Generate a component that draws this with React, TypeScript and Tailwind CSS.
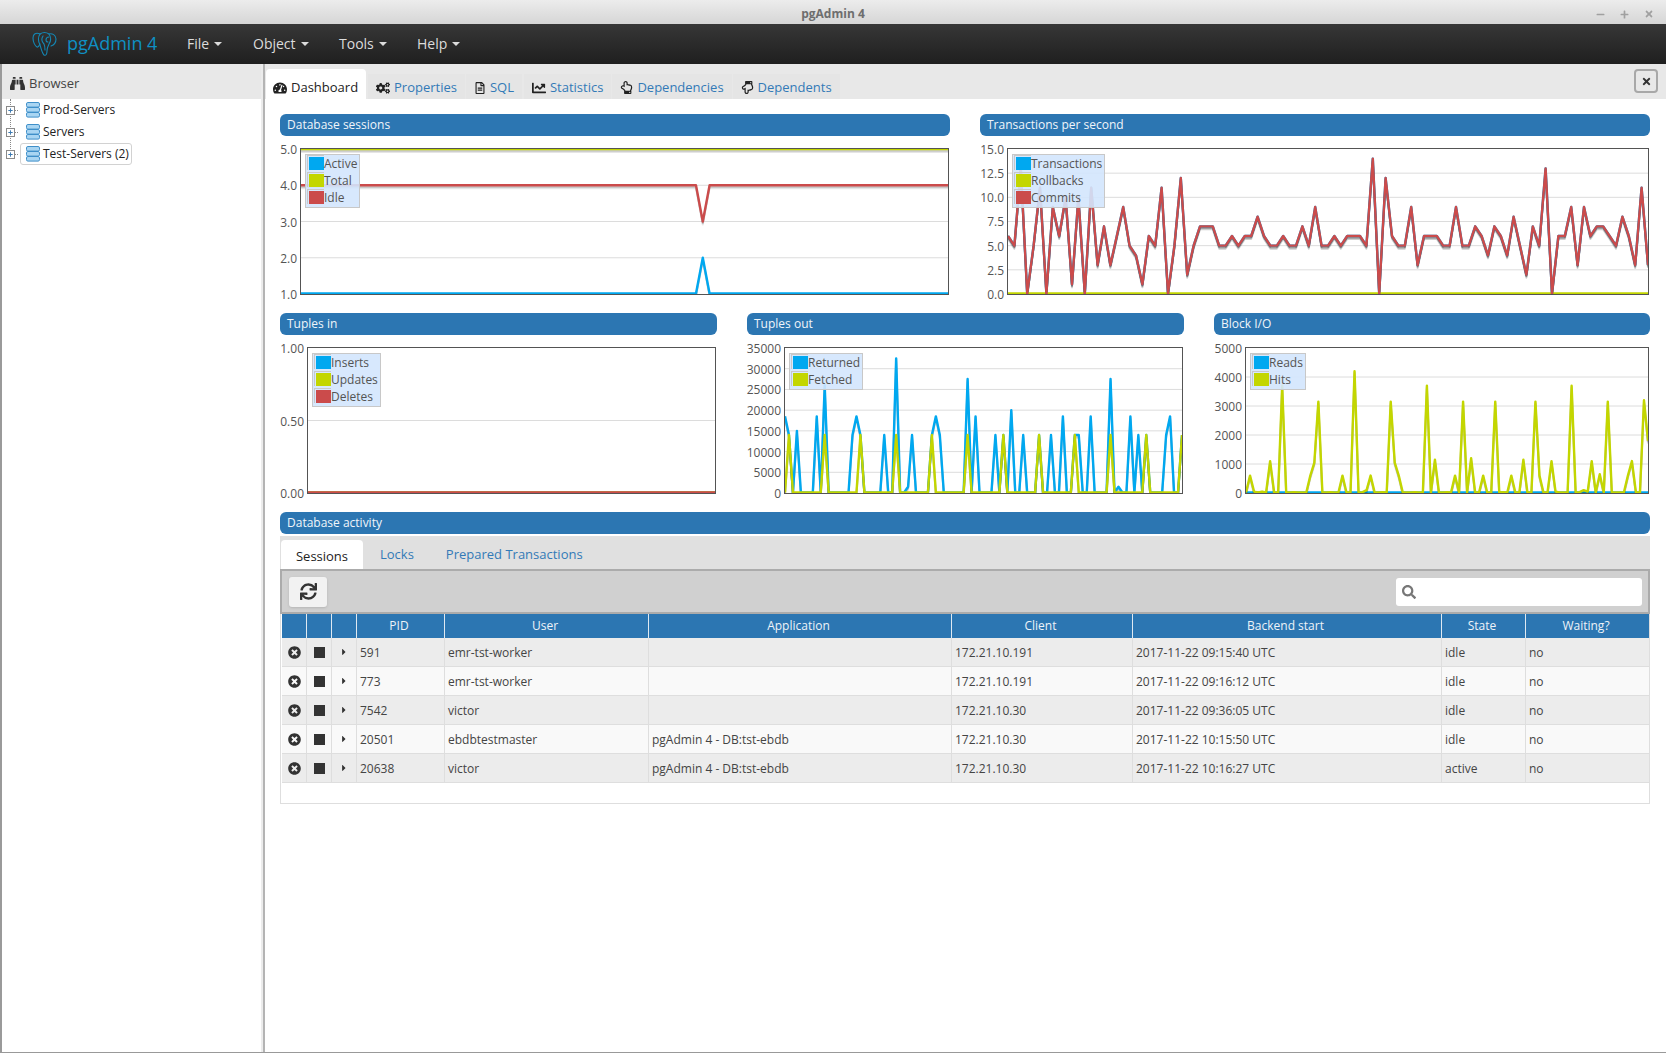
import React from 'react';
import { FaBinoculars, FaTachometerAlt, FaCogs, FaRegFileAlt, FaChartLine, FaRegHandPointUp, FaRegHandPointDown, FaTimes, FaSync, FaSearch, FaTimesCircle, FaCaretRight, FaMinus, FaPlus } from 'react-icons/fa';

const BLUE = '#00a8f0';
const LIME = '#c3d600';
const RED = '#cb4b4b';
type Pt = [number, number];
type Series = { label: string; color: string; points: Pt[] };

const even = (v: number[]): Pt[] => v.map((y, i) => [i / (v.length - 1), y]);
const sparse = (n: number, m: Record<number, number>): Pt[] => {
  const out: Pt[] = [];
  for (let i = 0; i <= n; i++) out.push([i / n, m[i] ?? 0]);
  return out;
};
const flat = (y: number): Pt[] => [[0, y], [1, y]];

const tps = [6,5,13,0,5,11,0,9,6,10,1,10,0,11,3,7,3,6,9,5,4,1,6,5,11,0,5,12,2,5,7,7,7,5,5,6,5,6,6,8,6,5,5,6,5,5,7,5,9,5,5,6,5,6,6,6,5,14,0,12,6,5,5,9,3,6,6,6,5,5,9,5,5,7,6,4,7,6,4,8,5,2,7,5,13,0,6,6,9,3,9,6,7,7,6,5,8,6,3,11,3];

const returned = sparse(100, {0:18500,1:14000,3:15000,8:18500,10:26000,17:14000,18:18500,19:14000,25:14000,28:32500,31:1500,32:14000,37:14000,38:18500,39:14000,46:27500,48:18500,53:14000,55:14000,57:20000,60:14000,64:14000,67:14000,70:18500,73:14000,74:14000,77:18500,82:27500,84:1500,87:18500,89:14000,91:14000,96:14000,97:18500,100:14000});
const fetched = sparse(100, {1:14000,10:14000,19:14000,28:14000,37:14000,46:14000,55:14000,64:14000,73:14000,82:14000,91:14000,100:14000});
const hits = sparse(100, {1:600,2:50,4:50,6:1100,9:3700,12:30,16:600,17:1050,18:3150,21:30,24:600,27:4200,29:30,30:100,31:600,34:30,36:3150,37:1050,38:600,42:30,45:3700,47:1150,50:30,52:600,54:3150,56:1200,58:30,59:600,62:3150,64:30,66:600,69:1150,72:3150,73:600,76:1100,77:50,81:3700,83:30,84:100,85:50,86:1100,88:650,90:3150,95:600,96:1100,99:3200,100:1800});

const H = 145;
function Plot({ series, min, max, ticks }: { series: Series[]; min: number; max: number; ticks: number[] }) {
  const py = (v: number) => H - ((v - min) / (max - min)) * H;
  return (
    <svg viewBox={`0 0 1000 ${H}`} preserveAspectRatio="none" className="block w-full h-full">
      {ticks.map((t) => (
        <line key={t} x1={0} x2={1000} y1={py(t)} y2={py(t)} stroke="#dcdcdc" strokeWidth={1} vectorEffect="non-scaling-stroke" />
      ))}
      {series.map((s) => {
        const pts = s.points.map(([x, y]) => `${x * 1000},${Math.min(py(y), H - 0.5)}`).join(' ');
        return (
          <g key={s.label} fill="none" strokeLinejoin="round">
            <polyline points={pts} stroke="#000" strokeOpacity={0.1} strokeWidth={2} transform="translate(0 3)" vectorEffect="non-scaling-stroke" />
            <polyline points={pts} stroke="#000" strokeOpacity={0.2} strokeWidth={2} transform="translate(0 1.5)" vectorEffect="non-scaling-stroke" />
            <polyline points={pts} stroke={s.color} strokeWidth={2.4} vectorEffect="non-scaling-stroke" />
          </g>
        );
      })}
    </svg>
  );
}

function Legend({ series }: { series: Series[] }) {
  return (
    <div className="absolute left-[4px] top-[5px] border border-[#c8c8c8] bg-[#d3e6fd]/90 pl-px pr-[2px] pb-px">
      {series.map((s) => (
        <div key={s.label} className="flex items-center h-[17px] text-[12px] leading-[17px] text-[#545454]">
          <div className="w-[17px] h-[15px] -mt-[2px] border-t border-l border-[#c8c8c8] pt-px pl-px">
            <div className="w-full h-[13px]" style={{ backgroundColor: s.color }} />
          </div>
          <span>{s.label}</span>
        </div>
      ))}
    </div>
  );
}

function Header({ title }: { title: string }) {
  return (
    <div className="h-[22px] rounded-[6px] bg-[#2c76b2] pl-[7px] text-[12px] leading-[21px] text-[#f0f5fa]">{title}</div>
  );
}

function Chart({ title, gutter, labels, ticks, min, max, series }: { title: string; gutter: string; labels: string[]; ticks: number[]; min: number; max: number; series: Series[] }) {
  return (
    <div>
      <Header title={title} />
      <div className="mt-[12px] flex h-[147px] pr-px">
        <div className={`${gutter} h-[147px] self-start shrink-0 flex flex-col justify-between pr-[3px] pt-[2px]`}>
          {labels.map((l) => (
            <div key={l} className="h-0 flex items-center justify-end text-[12px] text-[#545454] whitespace-nowrap">{l}</div>
          ))}
        </div>
        <div className="relative flex-1 border border-[#545454] bg-white">
          <Plot series={series} min={min} max={max} ticks={ticks} />
          <Legend series={series} />
        </div>
      </div>
    </div>
  );
}

function ServerIcon() {
  return (
    <svg width="14" height="16" viewBox="0 0 14 16" className="shrink-0">
      {[0.5, 5.5, 10.5].map((y) => (
        <rect key={y} x="0.5" y={y} width="13" height="4.6" rx="1.4" fill="#a9d5f2" stroke="#3f8fc9" strokeWidth="1" />
      ))}
    </svg>
  );
}

function TreeRow({ label, selected }: { label: string; selected?: boolean }) {
  return (
    <div className="relative flex h-[22px] items-center">
      <div className="relative z-10 ml-[4px] flex h-[9px] w-[9px] items-center justify-center border border-[#8a8a8a] bg-white">
        <FaPlus className="text-[#3a78b0]" size={5} />
      </div>
      <div className="w-[3px] border-t border-dotted border-[#888] mr-[2px]" />
      <div className={`flex h-[22px] items-center gap-[3px] rounded-[3px] border pl-[5px] pr-[2px] ${selected ? 'border-[#d2d2d2]' : 'border-transparent'}`}>
        <ServerIcon />
        <span className="text-[12px] text-[#222] whitespace-nowrap">{label}</span>
      </div>
    </div>
  );
}

function MainTab({ icon, label, active, className = '' }: { icon: React.ReactNode; label: string; active?: boolean; className?: string }) {
  if (active) {
    return (
      <div className="flex h-[30px] w-[100px] items-center gap-[4px] rounded-t-[4px] bg-white pl-[7px] pt-[8px] text-[13px] text-[#222]">
        {icon}
        <span>{label}</span>
      </div>
    );
  }
  return (
    <div className={`flex h-[25px] items-center gap-[4px] bg-[#e5e5e5] px-[8px] pt-[2px] text-[13px] text-[#337ab7] ${className}`}>
      <span className="text-[#222]">{icon}</span>
      <span>{label}</span>
    </div>
  );
}

const COLS = 'grid grid-cols-[25px_25px_25px_88px_204px_303px_181px_309px_84px_123px]';
const rows = [
  ['591', 'emr-tst-worker', '', '172.21.10.191', '2017-11-22 09:15:40 UTC', 'idle', 'no'],
  ['773', 'emr-tst-worker', '', '172.21.10.191', '2017-11-22 09:16:12 UTC', 'idle', 'no'],
  ['7542', 'victor', '', '172.21.10.30', '2017-11-22 09:36:05 UTC', 'idle', 'no'],
  ['20501', 'ebdbtestmaster', 'pgAdmin 4 - DB:tst-ebdb', '172.21.10.30', '2017-11-22 10:15:50 UTC', 'idle', 'no'],
  ['20638', 'victor', 'pgAdmin 4 - DB:tst-ebdb', '172.21.10.30', '2017-11-22 10:16:27 UTC', 'active', 'no'],
];
const heads = ['', '', '', 'PID', 'User', 'Application', 'Client', 'Backend start', 'State', 'Waiting?'];

function ElephantLogo() {
  return (
    <svg width="25" height="26" viewBox="0 0 25 26" fill="none" stroke="#1487b4" strokeWidth="1.1" strokeLinecap="round" strokeLinejoin="round">
      <path d="M8 3C4 1 1 3 1 7c0 4 2 8 4 9 1 .5 2-1 3-3" />
      <path d="M8 3c3-2 6-2 9 0 3-1 7 1 7 5 0 3-2 6-5 7" />
      <path d="M8 3C6 6 6 10 8 14c1 3 2 8 4 10 2 1 3-1 3-4 0-3 1-5 2-7 2-3 2-7 0-10" />
      <path d="M11 5c-2 3-1 6 1 8 1 2 1 4 1 6" />
      <path d="M17 6c-2 0-3 1-3 3 0 1 1 2 2 2" />
    </svg>
  );
}

function NavItem({ label, className }: { label: string; className: string }) {
  return (
    <div className={`flex items-center gap-[5px] pb-[2px] text-[14px] text-[#dcdcdc] ${className}`}>
      <span>{label}</span>
      <div className="mt-[2px] h-0 w-0 border-x-[4px] border-t-[4px] border-x-transparent border-t-[#dcdcdc]" />
    </div>
  );
}

export default function App() {
  const tx: Series[] = [
    { label: 'Transactions', color: BLUE, points: even(tps) },
    { label: 'Rollbacks', color: LIME, points: flat(0) },
    { label: 'Commits', color: RED, points: even(tps) },
  ];
  const sessions: Series[] = [
    { label: 'Active', color: BLUE, points: [[0, 1], [0.6105, 1], [0.621, 2], [0.6315, 1], [1, 1]] },
    { label: 'Total', color: LIME, points: flat(5) },
    { label: 'Idle', color: RED, points: [[0, 4], [0.6105, 4], [0.621, 3], [0.6315, 4], [1, 4]] },
  ];
  return (
    <div className="flex h-[1053px] w-[1666px] flex-col overflow-hidden bg-white" style={{ fontFamily: '"Open Sans", sans-serif' }}>
      <div className="relative flex h-[24px] shrink-0 items-center justify-center bg-gradient-to-b from-[#ececec] to-[#d6d6d6] pt-[3px] text-[12px] font-bold text-[#6e6e6e]">
        <span>pgAdmin 4</span>
        <div className="absolute right-[12px] top-[9px] flex items-center gap-[15px] text-[#a0a0a0]">
          <FaMinus size={9} />
          <FaPlus size={9} />
          <FaTimes size={10} />
        </div>
      </div>
      <div className="flex h-[40px] shrink-0 items-center bg-gradient-to-b from-[#373737] to-[#1f1f1f] pl-[32px]">
        <ElephantLogo />
        <span className="ml-[10px] w-[120px] pb-[1px] text-[18px] text-[#0f90c4]">pgAdmin 4</span>
        <NavItem label="File" className="w-[66px]" />
        <NavItem label="Object" className="w-[86px]" />
        <NavItem label="Tools" className="w-[78px]" />
        <NavItem label="Help" className="" />
      </div>
      <div className="flex min-h-0 flex-1 border-b border-[#999]">
        <div className="w-[263px] shrink-0 border-l-2 border-r-2 border-l-[#9a9a9a] border-r-[#ececec]">
          <div className="flex h-[35px] items-center gap-[4px] bg-[#e8e8e8] pl-[8px] pt-[4px] text-[13px] text-[#444]">
            <FaBinoculars className="text-[#333]" size={15} />
            <span>Browser</span>
          </div>
          <div className="relative">
            <div className="absolute bottom-[10px] left-[8px] top-0 border-l border-dotted border-[#888]" />
            <TreeRow label="Prod-Servers" />
            <TreeRow label="Servers" />
            <TreeRow label="Test-Servers (2)" selected />
          </div>
        </div>
        <div className="min-w-0 flex-1 border-l-2 border-[#b4b4b4]">
          <div className="relative flex h-[35px] items-end bg-[#e8e8e8] pl-[1px]">
            <MainTab active icon={<FaTachometerAlt size={14} />} label="Dashboard" />
            <MainTab className="ml-[2px]" icon={<FaCogs size={14} />} label="Properties" />
            <MainTab className="ml-[1px]" icon={<FaRegFileAlt size={12} />} label="SQL" />
            <MainTab className="ml-[2px]" icon={<FaChartLine size={14} />} label="Statistics" />
            <MainTab className="ml-[1px]" icon={<FaRegHandPointUp size={13} />} label="Dependencies" />
            <MainTab className="ml-[1px]" icon={<FaRegHandPointDown size={13} />} label="Dependents" />
            <div className="absolute right-[8px] top-[5px] flex h-[24px] w-[24px] items-center justify-center rounded-[4px] border-2 border-[#a8a8a8] text-[#333]">
              <FaTimes size={11} />
            </div>
          </div>
          <div className="pl-[15px] pr-[16px] pt-[15px]">
            <div className="grid grid-cols-2 gap-[30px]">
              <Chart title="Database sessions" gutter="w-[20px]" labels={['5.0', '4.0', '3.0', '2.0', '1.0']} ticks={[2, 3, 4]} min={1} max={5} series={sessions} />
              <Chart title="Transactions per second" gutter="w-[27px]" labels={['15.0', '12.5', '10.0', '7.5', '5.0', '2.5', '0.0']} ticks={[2.5, 5, 7.5, 10, 12.5]} min={0} max={15} series={tx} />
            </div>
            <div className="mt-[18px] grid grid-cols-[437px_437px_436px] gap-[30px]">
              <Chart title="Tuples in" gutter="w-[27px]" labels={['1.00', '0.50', '0.00']} ticks={[0.5]} min={0} max={1} series={[
                { label: 'Inserts', color: BLUE, points: flat(0) },
                { label: 'Updates', color: LIME, points: flat(0) },
                { label: 'Deletes', color: RED, points: flat(0) },
              ]} />
              <Chart title="Tuples out" gutter="w-[37px]" labels={['35000', '30000', '25000', '20000', '15000', '10000', '5000', '0']} ticks={[5000, 10000, 15000, 20000, 25000, 30000]} min={0} max={35000} series={[
                { label: 'Returned', color: BLUE, points: returned },
                { label: 'Fetched', color: LIME, points: fetched },
              ]} />
              <Chart title="Block I/O" gutter="w-[31px]" labels={['5000', '4000', '3000', '2000', '1000', '0']} ticks={[1000, 2000, 3000, 4000]} min={0} max={5000} series={[
                { label: 'Reads', color: BLUE, points: flat(0) },
                { label: 'Hits', color: LIME, points: hits },
              ]} />
            </div>
            <div className="mt-[18px]">
              <Header title="Database activity" />
              <div className="mt-[2px] flex h-[33px] items-end bg-[#e0e0e0] pl-px text-[13px] text-[#337ab7]">
                <div className="flex h-[29px] w-[82px] items-center justify-center rounded-t-[4px] bg-white pt-[4px] text-[#222]">Sessions</div>
                <div className="ml-[17px] h-[29px] leading-[28px]">Locks</div>
                <div className="ml-[32px] h-[29px] leading-[28px]">Prepared Transactions</div>
              </div>
              <div className="flex h-[45px] items-center justify-between border-2 border-[#ababab] bg-[#d0d0d0] pl-[7px] pr-[6px]">
                <div className="flex h-[30px] w-[38px] items-center justify-center rounded-[3px] bg-[#f2f2f2] text-[#333] shadow-sm">
                  <FaSync size={17} />
                </div>
                <div className="flex h-[28px] w-[246px] items-center rounded-[3px] bg-white pl-[6px] text-[#777]">
                  <FaSearch size={14} />
                </div>
              </div>
              <div className="border border-t-0 border-[#dedede] pl-px">
                <div className={`${COLS} h-[24px] bg-[#2c76b2] text-[12px] text-[#eef3f8]`}>
                  {heads.map((h, i) => (
                    <div key={i} className={`flex items-center justify-center pr-[3px] ${i < 9 ? 'border-r border-[#dfe9f2]' : ''}`}>{h}</div>
                  ))}
                </div>
                {rows.map((r, ri) => (
                  <div key={ri} className={`${COLS} h-[29px] border-b border-[#dedede] text-[12px] text-[#444] ${ri % 2 === 0 ? 'bg-[#ececec]' : 'bg-[#f9f9f9]'}`}>
                    <div className="flex items-center justify-center border-r border-[#dedede] text-[#333]"><FaTimesCircle size={13} /></div>
                    <div className="flex items-center justify-center border-r border-[#dedede]"><div className="h-[11px] w-[11px] bg-[#333]" /></div>
                    <div className="flex items-center justify-center border-r border-[#dedede] text-[#333]"><FaCaretRight size={10} /></div>
                    {r.map((c, ci) => (
                      <div key={ci} className={`flex items-center pl-[3px] pt-[1px] whitespace-nowrap ${ci < 6 ? 'border-r border-[#dedede]' : ''}`}>{c}</div>
                    ))}
                  </div>
                ))}
                <div className="h-[20px]" />
              </div>
            </div>
          </div>
        </div>
      </div>
    </div>
  );
}
